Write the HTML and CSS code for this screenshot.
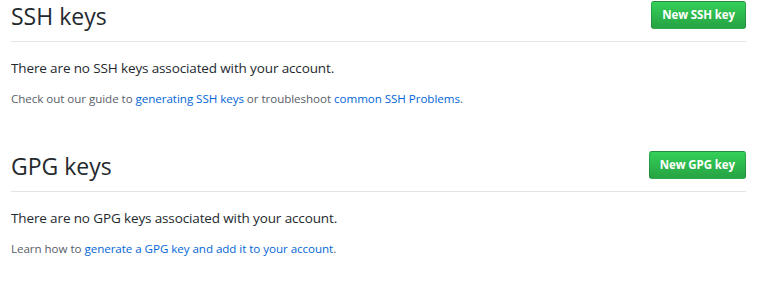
FILE: index.html
```html
<!DOCTYPE html>
<html lang="en">
<head>
<meta charset="utf-8">
<title>SSH and GPG keys</title>
<link rel="stylesheet" href="styles.css">
</head>
<body>
<main class="page">
  <section class="keys">
    <div class="subhead">
      <h2 class="subhead-heading">SSH keys</h2>
      <a class="btn btn-primary" href="#">New SSH key</a>
    </div>
    <p class="empty">There are no SSH keys associated with your account.</p>
    <p class="note">Check out our guide to <a href="#">generating SSH keys</a> or troubleshoot <a href="#">common SSH Problems</a>.</p>
  </section>
  <section class="keys">
    <div class="subhead">
      <h2 class="subhead-heading">GPG keys</h2>
      <a class="btn btn-primary" href="#">New GPG key</a>
    </div>
    <p class="empty">There are no GPG keys associated with your account.</p>
    <p class="note">Learn how to <a href="#">generate a GPG key and add it to your account</a>.</p>
  </section>
</main>
</body>
</html>
```

FILE: styles.css
```css
html, body {
  margin: 0;
  padding: 0;
  background: #fff;
}
body {
  font-family: "Open Sans", "Noto Sans", sans-serif;
  color: #24292e;
  font-size: 13.5px;
  letter-spacing: -0.13px;
}
.page {
  padding: 0 13px 0 11px;
}
.keys {
  height: 150px;
}
.subhead {
  display: flex;
  align-items: center;
  justify-content: space-between;
  padding-bottom: 8px;
  border-bottom: 1px solid #e1e4e8;
  height: 33px;
}
.subhead-heading {
  margin: 0;
  font-size: 23px;
  font-weight: 400;
  line-height: 33px;
  letter-spacing: 0;
}
.btn {
  display: inline-block;
  padding: 3px 10px;
  font-size: 11.5px;
  line-height: 20px;
  font-weight: 700;
  letter-spacing: -0.1px;
  border-radius: 3px;
  text-decoration: none;
  border: 1px solid rgba(27,31,35,0.2);
  margin-top: -3px;
}
.btn-primary {
  color: #fff;
  background-image: linear-gradient(-180deg, #34d058 0%, #28a745 90%);
}
.empty {
  margin: 16px 0 0;
  line-height: 21px;
}
.note {
  margin: 11px 0 0;
  font-size: 11.6px;
  letter-spacing: -0.05px;
  line-height: 18px;
  color: #586069;
}
.note a {
  color: #0366d6;
  text-decoration: none;
}
```
